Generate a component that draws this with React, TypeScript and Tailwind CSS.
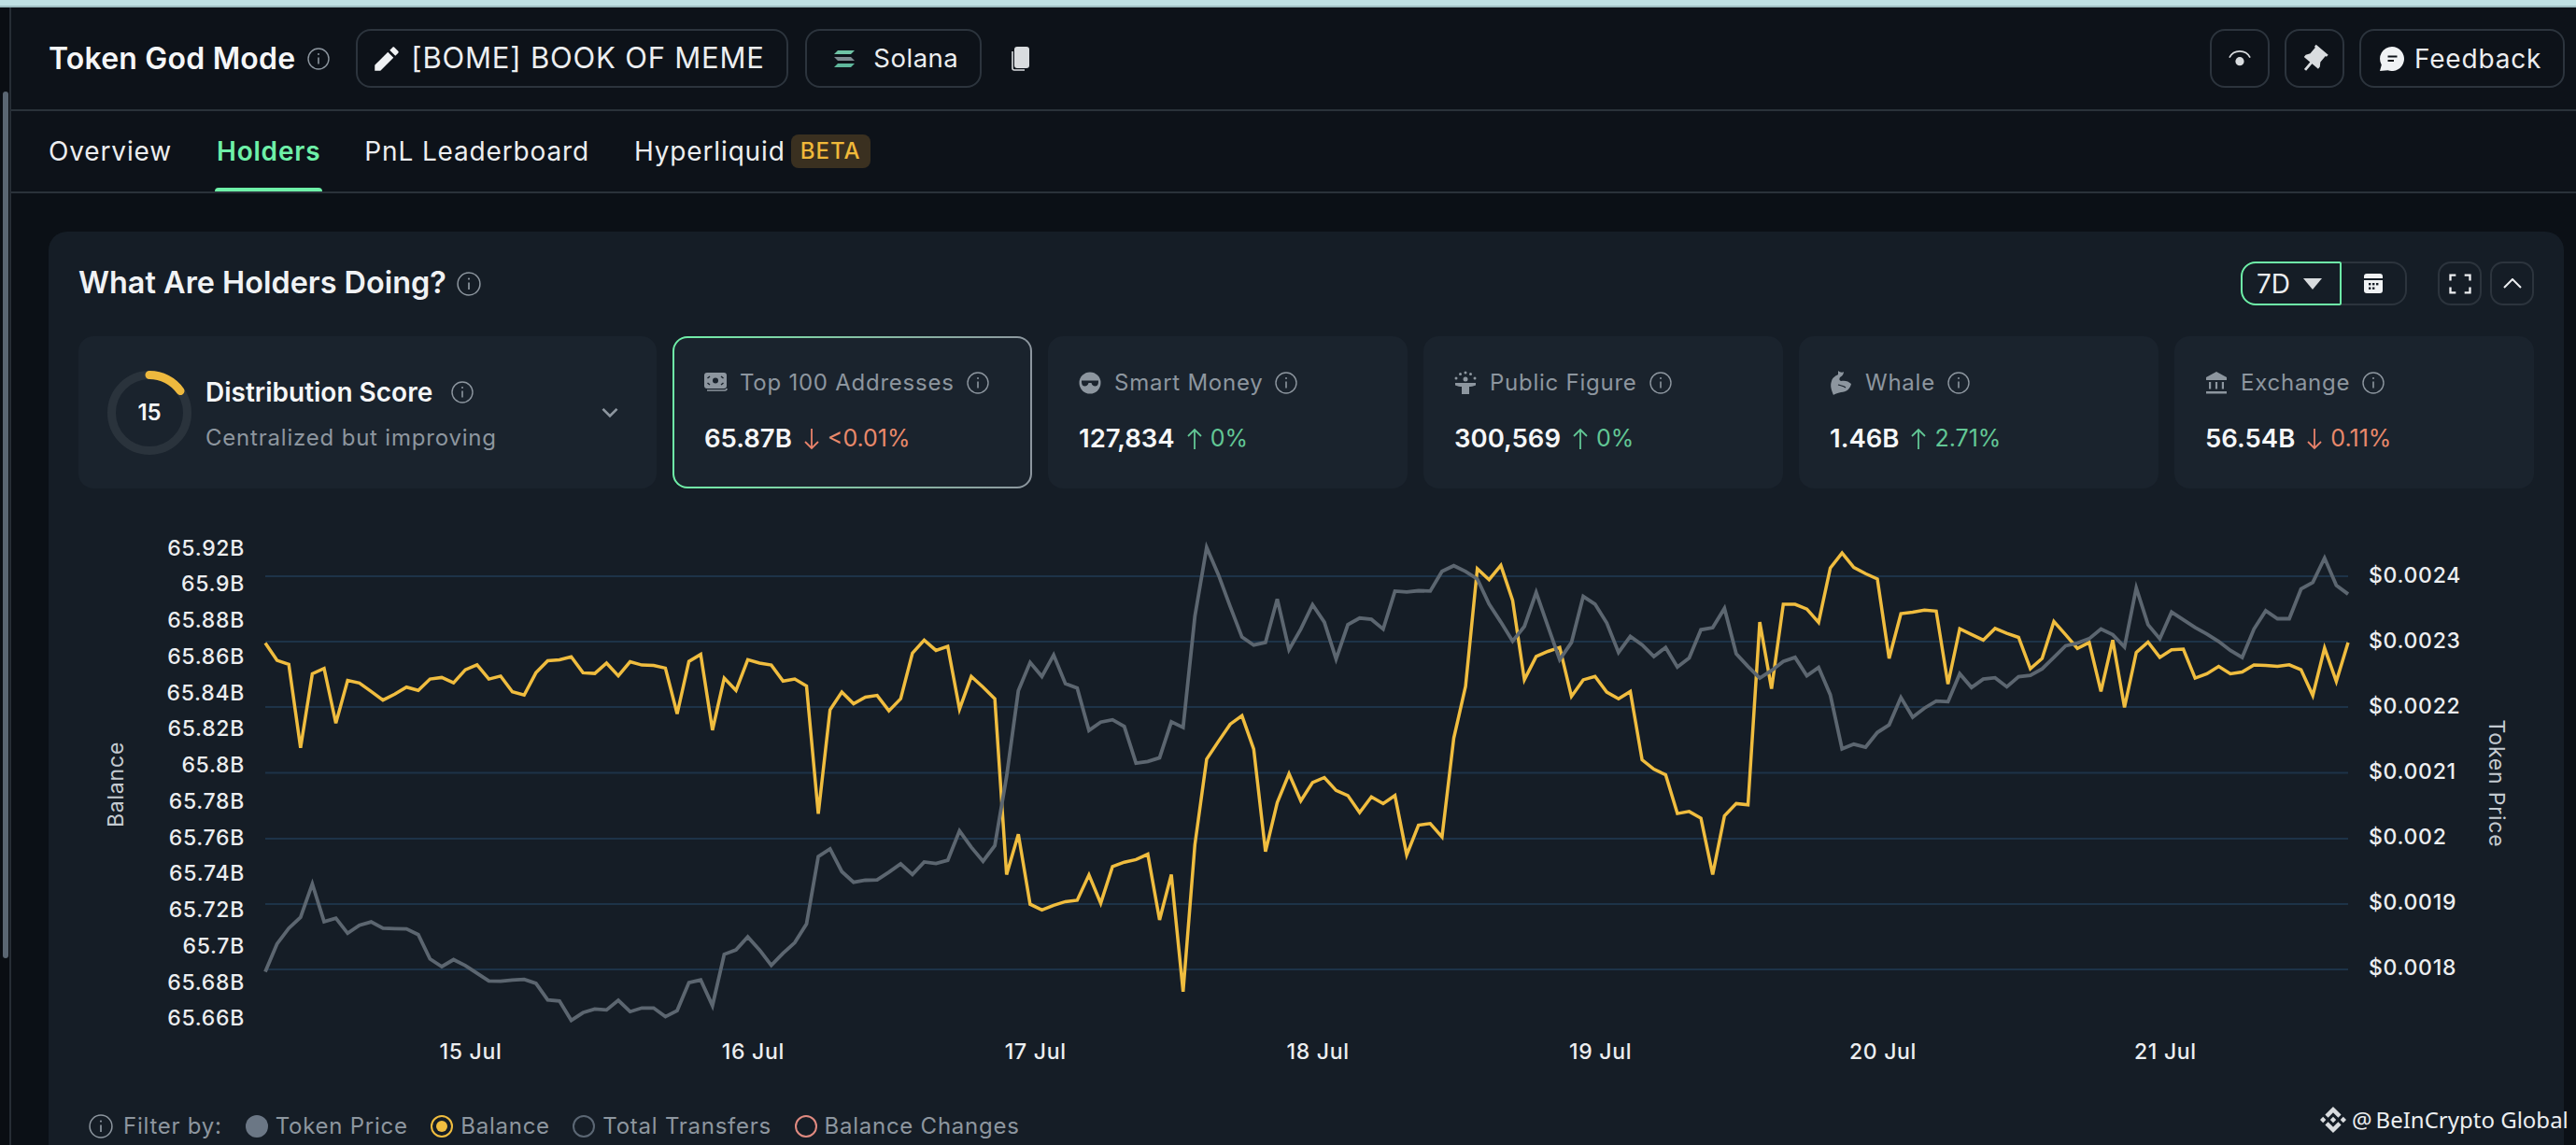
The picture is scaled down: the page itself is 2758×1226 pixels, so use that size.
import { RiPencilFill, RiPushpin2Fill, RiFullscreenLine, RiArrowDownSLine } from "react-icons/ri";
import { SiBinance } from "react-icons/si";

// y values read off the chart, x is evenly spaced
const balance = [
  360, 412, 424, 674, 452, 436, 600, 472, 480, 505,
  531, 513, 492, 502, 468, 463, 479, 440, 425, 468,
  459, 506, 516, 449, 413, 410, 401, 449, 451, 420,
  458, 416, 426, 427, 435, 572, 415, 394, 621, 465,
  502, 410, 420, 426, 474, 468, 489, 872, 560, 507,
  542, 522, 517, 563, 527, 390, 351,
  382, 370, 558, 460, 492, 527, 1054, 933, 1143, 1160,
  1146, 1135, 1131, 1055, 1140, 1030, 1017, 1009, 993, 1190,
  1054, 1405, 965, 708, 655, 603, 578, 678, 985, 838,
  752, 833, 778, 763, 802, 817, 868, 821, 841, 817,
  995, 906, 901, 941, 645, 490, 137, 170, 127, 232,
  470, 400, 385, 373, 520, 470, 460, 507, 527, 505,
  710, 738, 755, 871, 865, 885, 1054, 878, 841, 845,
  297, 497,
  244, 244, 258, 298, 135, 90, 133, 152, 168, 406,
  272, 267, 261, 264, 483, 317, 334, 351, 316, 331,
  343, 437, 406, 295, 335, 376, 358, 505, 351, 553,
  388, 357, 403, 380, 378, 465, 452, 430, 452, 447,
  426, 427, 430, 425, 440, 517, 375, 475, 358,
];

const tokenPrice = [
  1345, 1262, 1215, 1182, 1082, 1195, 1185, 1230, 1206, 1196,
  1215, 1216, 1217, 1234, 1307, 1330, 1309, 1327, 1350, 1373,
  1374, 1370, 1368, 1380, 1430, 1433, 1491, 1468, 1457, 1460,
  1431, 1465, 1454, 1454, 1480, 1462, 1378, 1370, 1447, 1293,
  1280, 1241, 1280, 1326, 1290, 1258, 1202, 1000, 977, 1045,
  1077, 1071, 1070, 1047, 1022, 1054, 1016,
  1021, 1011, 923, 972, 1014, 967, 760, 503, 418, 460,
  396, 482, 495, 622, 597, 590, 610, 720, 715, 704,
  596, 613, 280, 73, 155, 250, 342, 366, 358, 228,
  380, 318, 245, 297, 408, 305, 285, 289, 318, 204,
  207, 203, 204, 145, 128, 145, 168, 243, 297, 354,
  310, 208, 310, 410, 358, 220, 243, 300, 388, 340,
  365, 400, 373, 432, 405, 320, 314, 256, 392, 430,
  465, 442,
  415, 403, 458, 433, 515, 677, 663, 672, 628, 605,
  523, 582, 555, 534, 536, 452, 493, 468, 464, 491,
  461, 457, 437, 403, 368, 360, 347, 318, 335, 372,
  195, 305, 347, 267, 290, 313, 333, 355, 382, 403,
  318, 263, 287, 287, 198, 178, 105, 187, 213,
];

const toPoints = (ys: number[]) =>
  ys.map((v, i) => `${(284 + (i * 2230) / (ys.length - 1)).toFixed(1)},${(560 + v / 2.8).toFixed(1)}`).join(" ");

const leftTicks = ["65.92B", "65.9B", "65.88B", "65.86B", "65.84B", "65.82B", "65.8B", "65.78B", "65.76B", "65.74B", "65.72B", "65.7B", "65.68B", "65.66B"];
const rightTicks = ["$0.0024", "$0.0023", "$0.0022", "$0.0021", "$0.002", "$0.0019", "$0.0018"];
const gridYs = [617, 687, 757, 827.5, 898, 968, 1038];
const days = ["15 Jul", "16 Jul", "17 Jul", "18 Jul", "19 Jul", "20 Jul", "21 Jul"];

function InfoIcon({ className = "" }: { className?: string }) {
  return (
    <svg viewBox="0 0 24 24" className={className} fill="none" stroke="currentColor" strokeWidth="1.4">
      <circle cx="12" cy="12" r="11" />
      <path d="M12 10.5v7" strokeWidth="1.6" />
      <circle cx="12" cy="7" r="1" fill="currentColor" stroke="none" />
    </svg>
  );
}

function CashIcon() {
  return (
    <svg viewBox="0 0 26 24" className="w-[26px] h-[24px]">
      <path d="M3 20h19a2 2 0 0 0 2-2" fill="none" stroke="#8d969f" strokeWidth="1.6" />
      <rect x="0" y="1" width="24" height="17" rx="3" fill="#8d969f" />
      <circle cx="12" cy="9.5" r="3" fill="#1a232d" />
      <path d="M3.5 7l2.5-2M20.500 7L18 5M3.500 12l2.500 2M20.500 12L18 14" stroke="#1a232d" strokeWidth="1.500" />
    </svg>
  );
}

function GlassesIcon() {
  return (
    <svg viewBox="0 0 24 24" className="w-[24px] h-[24px]">
      <circle cx="12" cy="12" r="11.500" fill="#8d969f" />
      <path d="M3 9.500h18v1.500c0 3-1.500 4.500-3.500 4.500s-3.500-1.500-4-3.500h-3c-.5 2-2 3.500-4 3.500S3 14 3 11z" fill="#1a232d" />
    </svg>
  );
}

function FigureIcon() {
  return (
    <svg viewBox="0 0 24 26" className="w-[24px] h-[26px]" fill="#8d969f">
      <circle cx="12" cy="2" r="1.500" />
      <circle cx="6.500" cy="3.500" r="1.500" />
      <circle cx="17.500" cy="3.500" r="1.500" />
      <circle cx="2" cy="8" r="1.500" />
      <circle cx="22" cy="8" r="1.500" />
      <circle cx="12" cy="9" r="2.500" />
      <path d="M1 13h22v2.500c-3 1-5 1.500-7 1.500v8H8v-8c-2 0-4-.5-7-1.500z" />
    </svg>
  );
}

function WhaleIcon() {
  return (
    <svg viewBox="0 0 24 28" className="w-[24px] h-[28px]">
      <path d="M9 1c2 2 5 2 6 1 0 3-2 5-4 6-1 2-1 3 1 4 4-1 8 0 11 3-1 5-5 9-11 9-4 1-7 2-8 3-2-5-4-10-2-15 1-4 5-6 7-7z" fill="#8d969f" />
      <path d="M9 16c3 1 6 1 8 3" fill="none" stroke="#1a232d" strokeWidth="1.200" />
    </svg>
  );
}

function BankIcon() {
  return (
    <svg viewBox="0 0 24 24" className="w-[24px] h-[24px]" fill="#8d969f">
      <path d="M12 0l11 6v3H1V6z" />
      <rect x="4" y="11" width="2.200" height="7.500" />
      <rect x="10.900" y="11" width="2.200" height="7.500" />
      <rect x="17.800" y="11" width="2.200" height="7.500" />
      <rect x="1" y="21" width="22" height="2.500" />
    </svg>
  );
}

function SolanaIcon() {
  return (
    <svg viewBox="0 0 22 18" className="w-[22px] h-[18px]">
      <polygon points="4,0 22,0 18,4 0,4" fill="#6fc3a5" />
      <polygon points="0,7 18,7 22,11 4,11" fill="#7d8a90" />
      <polygon points="4,14 22,14 18,18 0,18" fill="#5fb79c" />
    </svg>
  );
}

function CopyIcon() {
  return (
    <svg viewBox="0 0 20 26" className="w-[20px] h-[26px]">
      <path d="M2 5v18a2 2 0 0 0 2 2h11" fill="none" stroke="#d9dcdf" strokeWidth="1.600" />
      <rect x="4" y="0" width="16" height="23" rx="3" fill="#d9dcdf" />
    </svg>
  );
}

function WatchIcon() {
  return (
    <svg viewBox="0 0 26 20" className="w-[24px] h-[19px]" fill="none">
      <path d="M1 9a13.500 13.500 0 0 1 24 0" stroke="#d9dcdf" strokeWidth="1.800" />
      <circle cx="13" cy="13.500" r="5" fill="#d9dcdf" />
    </svg>
  );
}

function FeedbackIcon() {
  return (
    <svg viewBox="0 0 26 26" className="w-[26px] h-[26px]">
      <path d="M13 0a13 13 0 1 1-4.500 25.200L0 26l1.800-6.500A13 13 0 0 1 13 0z" fill="#f0f2f4" />
      <path d="M8.500 10.500h10M8.500 15h6.500" stroke="#0d1219" strokeWidth="2" />
    </svg>
  );
}

function CalendarIcon() {
  return (
    <svg viewBox="0 0 20 21" className="w-[20px] h-[21px]" fill="#f0f2f4">
      <path d="M3 0h14a3 3 0 0 1 3 3v2H0V3a3 3 0 0 1 3-3z" />
      <path d="M0 7h20v11a3 3 0 0 1-3 3H3a3 3 0 0 1-3-3z" />
      <g fill="#151d26">
        <rect x="5" y="10" width="2.400" height="2.400" />
        <rect x="9" y="10" width="2.400" height="2.400" />
        <rect x="13" y="10" width="2.400" height="2.400" />
        <rect x="5" y="14.500" width="2.400" height="2.400" />
        <rect x="9" y="14.500" width="2.400" height="2.400" />
      </g>
    </svg>
  );
}

function Arrow({ up, color }: { up: boolean; color: string }) {
  return (
    <svg viewBox="0 0 18 24" className={`w-[18px] h-[24px] ${up ? "" : "rotate-180"}`} fill="none" stroke={color} strokeWidth="1.800">
      <path d="M9 23V2M2 9l7-7 7 7" />
    </svg>
  );
}

type Stat = { label: string; icon: React.ReactNode; value: string; change: string; up: boolean };

const stats: Stat[] = [
  { label: "Smart Money", icon: <GlassesIcon />, value: "127,834", change: "0%", up: true },
  { label: "Public Figure", icon: <FigureIcon />, value: "300,569", change: "0%", up: true },
  { label: "Whale", icon: <WhaleIcon />, value: "1.46B", change: "2.71%", up: true },
  { label: "Exchange", icon: <BankIcon />, value: "56.54B", change: "0.11%", up: false },
];

function StatBody({ stat }: { stat: Stat }) {
  return (
    <>
      <div className="flex items-center h-8 text-[24px] tracking-[0.75px] text-[#8d969f]">
        <span className="w-[38px] flex items-center">{stat.icon}</span>
        <span>{stat.label}</span>
        <InfoIcon className="w-6 h-6 ml-[13px]" />
      </div>
      <div className="flex items-center h-8 mt-7">
        <span className="text-[27.500px] font-semibold text-[#f5f6f7]">{stat.value}</span>
        <span className="ml-[12px] mr-[8px] flex items-center">
          <Arrow up={stat.up} color={stat.up ? "#62c795" : "#e8826b"} />
        </span>
        <span className={`text-[25px] ${stat.up ? "text-[#62c795]" : "text-[#e8896b]"}`}>{stat.change}</span>
      </div>
    </>
  );
}

function Radio({ ring, dot, label }: { ring: string; dot?: string; label: string }) {
  return (
    <div className="flex items-center gap-2">
      <span className={`w-6 h-6 rounded-full border-2 flex items-center justify-center ${ring}`}>
        {dot && <span className={`rounded-full ${dot}`} />}
      </span>
      <span>{label}</span>
    </div>
  );
}

function Chart() {
  return (
    <svg viewBox="84 523 2629 660" className="w-full h-[660px] block">
      {gridYs.map((y) => (
        <line key={y} x1="284" x2="2514" y1={y} y2={y} stroke="#1d3348" strokeWidth="2" />
      ))}
      <g className="text-[23px] font-medium tracking-[0.7px]" fill="#eceef0">
        {leftTicks.map((t, i) => (
          <text key={t} x="262" y={586.5 + i * 38.75} textAnchor="end" dominantBaseline="central">{t}</text>
        ))}
        {rightTicks.map((t, i) => (
          <text key={t} x="2536" y={616 + i * 70} dominantBaseline="central">{t}</text>
        ))}
        {days.map((d, i) => (
          <text key={d} x={504 + i * 302.4} y="1125.500" textAnchor="middle" dominantBaseline="central">{d}</text>
        ))}
      </g>
      <g className="text-[23px] tracking-[0.8px]" fill="#c4cad0">
        <text x="124" y="840" textAnchor="middle" dominantBaseline="central" transform="rotate(-90 124 840)">Balance</text>
        <text x="2673" y="839" textAnchor="middle" dominantBaseline="central" transform="rotate(90 2673 839)">Token Price</text>
      </g>
      <polyline points={toPoints(balance)} fill="none" stroke="#f0bd3f" strokeWidth="3.500" />
      <polyline points={toPoints(tokenPrice)} fill="none" stroke="#5c6670" strokeWidth="3.800" />
    </svg>
  );
}

export default function App() {
  return (
    <div className="relative w-[2758px] h-[1226px] overflow-hidden bg-[#0d1219] font-['Inter',sans-serif] text-white">
      <div className="h-2 bg-[#bfe0e3] border-b-2 border-[#9dbcc0]" />

      <div className="flex h-[1218px]">
        {/* scroll rail */}
        <div className="w-3 shrink-0 pt-[90px] pl-[3px] bg-[#0a0e13] border-r-2 border-[#262d35]">
          <div className="w-[6px] h-[928px] rounded-full bg-[#5a6672]" />
        </div>

        <div className="flex-1 min-w-0 flex flex-col">
          {/* header */}
          <header className="h-[111px] shrink-0 flex items-center pl-10 pr-[12px] border-b-2 border-[#2a323a]">
            <span className="text-[32px] font-semibold tracking-[0.2px] text-[#f5f6f7]">Token God Mode</span>
            <InfoIcon className="w-6 h-6 ml-[13px] text-[#8d969f]" />
            <div className="ml-[28px] h-[63px] w-[463px] flex items-center pl-[14px] border-2 border-[#2c343d] rounded-[16px]">
              <RiPencilFill className="w-[34px] h-[34px] text-[#f0f2f4]" />
              <span className="ml-[9px] text-[31px] tracking-[0.8px] text-[#eceef0]">[BOME] BOOK OF MEME</span>
            </div>
            <div className="ml-[18px] h-[63px] w-[189px] flex items-center pl-[29px] border-2 border-[#2c343d] rounded-[16px]">
              <SolanaIcon />
              <span className="ml-[20px] text-[27.500px] tracking-[0.5px] text-[#eceef0]">Solana</span>
            </div>
            <span className="ml-[31px]"><CopyIcon /></span>

            <div className="ml-auto flex items-center gap-[16px]">
              <div className="w-[64px] h-[63px] flex items-center justify-center border-2 border-[#2c343d] rounded-[16px]">
                <WatchIcon />
              </div>
              <div className="w-[64px] h-[63px] flex items-center justify-center border-2 border-[#2c343d] rounded-[16px]">
                <RiPushpin2Fill className="w-[34px] h-[34px] text-[#d9dcdf] rotate-[40deg]" />
              </div>
              <div className="w-[220px] h-[63px] flex items-center pl-[20px] border-2 border-[#2c343d] rounded-[16px]">
                <FeedbackIcon />
                <span className="ml-[11px] text-[28px] tracking-[0.8px] text-[#eceef0]">Feedback</span>
              </div>
            </div>
          </header>

          {/* tabs */}
          <nav className="h-[88px] shrink-0 flex items-stretch pl-10 border-b-2 border-[#2a323a] text-[28px] tracking-[0.85px] text-[#eceef0]">
            <div className="flex items-center">Overview</div>
            <div className="relative ml-[48px] flex items-center font-semibold text-[#6ef0a8] tracking-[0.8px]">
              Holders
              <span className="absolute -left-[2px] -right-[2px] bottom-0 h-1 rounded-t bg-[#6ef0a8]" />
            </div>
            <div className="ml-[47px] flex items-center">PnL Leaderboard</div>
            <div className="ml-[48px] flex items-center">Hyperliquid</div>
            <div className="ml-[6px] flex items-center">
              <span className="h-9 w-[85px] flex items-center justify-center rounded-lg bg-[#3a3020] text-[24px] font-medium text-[#f0b93a] tracking-[1px]">BETA</span>
            </div>
          </nav>

          {/* card */}
          <div className="flex-1 min-h-0 flex flex-col pl-10 pr-[13px] pt-[41px] bg-[#0b1016]">
            <section className="flex-1 w-[2693px] rounded-t-[20px] bg-[#151d26] px-8 pt-8">
              <div className="flex items-center h-[47px]">
                <span className="text-[32.400px] font-semibold text-[#f0f2f4]">What Are Holders Doing?</span>
                <InfoIcon className="w-[26px] h-[26px] ml-[11px] text-[#8d969f]" />

                <div className="ml-auto flex items-center h-[47px]">
                  <div className="w-[108px] h-full flex items-center pl-[15px] border-2 border-[#6ef0a8] rounded-l-[16px] rounded-r-[2px]">
                    <span className="text-[28px] text-[#eceef0]">7D</span>
                    <svg viewBox="0 0 20 12" className="ml-[14px] w-5 h-3" fill="#d9dcdf"><path d="M0 0h20L10 12z" /></svg>
                  </div>
                  <div className="w-[70px] h-full flex items-center justify-center border-2 border-l-0 border-[#2c343d] rounded-r-[16px]">
                    <CalendarIcon />
                  </div>
                  <div className="ml-[33px] w-[47px] h-full flex items-center justify-center border-2 border-[#2c343d] rounded-[14px]">
                    <RiFullscreenLine className="w-[28px] h-[28px] text-[#eceef0]" />
                  </div>
                  <div className="ml-[9px] w-[47px] h-full flex items-center justify-center border-2 border-[#2c343d] rounded-[14px]">
                    <svg viewBox="0 0 20 11" className="w-5 h-[11px]" fill="none" stroke="#eceef0" strokeWidth="2"><path d="M1 10l9-9 9 9" /></svg>
                  </div>
                </div>
              </div>

              <div className="grid grid-cols-[619px_repeat(5,1fr)] gap-[17px] mt-[33px] h-[163px]">
                <div className="flex items-center rounded-[16px] bg-[#1a232d] pl-[31px] pr-[34px]">
                  <div className="relative w-[90px] h-[90px] shrink-0 flex items-center justify-center">
                    <svg viewBox="0 0 90 90" className="absolute inset-0">
                      <circle cx="45" cy="45" r="40.500" fill="none" stroke="#2a333c" strokeWidth="9" />
                      <path d="M45 4.500A40.500 40.500 0 0 1 78 21.500" fill="none" stroke="#eeb93e" strokeWidth="9" strokeLinecap="round" />
                    </svg>
                    <span className="text-[24px] font-semibold text-[#f5f6f7]">15</span>
                  </div>
                  <div className="ml-[15px] pt-[3px] flex flex-col">
                    <div className="flex items-center">
                      <span className="text-[28px] font-semibold text-[#f5f6f7]">Distribution Score</span>
                      <InfoIcon className="w-6 h-6 ml-[20px] text-[#8d969f]" />
                    </div>
                    <span className="mt-[10px] text-[24px] tracking-[0.8px] text-[#8d969f]">Centralized but improving</span>
                  </div>
                  <RiArrowDownSLine className="ml-auto w-8 h-8 text-[#8d969f]" />
                </div>

                <div className="rounded-[16px] p-[2px] bg-linear-to-r from-[#6ef0a8] to-[#8d969f]">
                  <div className="h-full rounded-[14px] bg-[#1a232d] pl-[32px] pt-[32px]">
                    <StatBody stat={{ label: "Top 100 Addresses", icon: <CashIcon />, value: "65.87B", change: "<0.01%", up: false }} />
                  </div>
                </div>

                {stats.map((s) => (
                  <div key={s.label} className="rounded-[16px] bg-[#1a232d] pl-[33px] pt-[34px]">
                    <StatBody stat={s} />
                  </div>
                ))}
              </div>

              <Chart />

              <div className="flex items-center h-[46px] pl-[11px] text-[24px] tracking-[0.75px] text-[#8d969f]">
                <InfoIcon className="w-[26px] h-[26px]" />
                <span className="ml-[11px] mr-[25px]">Filter by:</span>
                <div className="flex items-center gap-[24.500px]">
                  <div className="flex items-center gap-2">
                    <span className="w-6 h-6 rounded-full bg-[#6b7785]" />
                    <span>Token Price</span>
                  </div>
                  <Radio ring="border-[#f0bd3f]" dot="w-3 h-3 bg-[#f0bd3f]" label="Balance" />
                  <Radio ring="border-[#5b6774]" label="Total Transfers" />
                  <Radio ring="border-[#e08a80]" label="Balance Changes" />
                </div>
              </div>
            </section>
          </div>
        </div>
      </div>

      {/* watermark sits over the card edge */}
      <div className="absolute left-[2484px] top-[1181px] flex items-center h-9 whitespace-nowrap font-['Noto_Sans',sans-serif] text-[24px] text-[#eceef0]">
        <SiBinance className="w-[28px] h-[28px] text-[#d9dcdf]" />
        <span className="ml-[6px]">@</span>
        <span className="ml-[4px]">BeInCrypto Global</span>
      </div>
    </div>
  );
}
